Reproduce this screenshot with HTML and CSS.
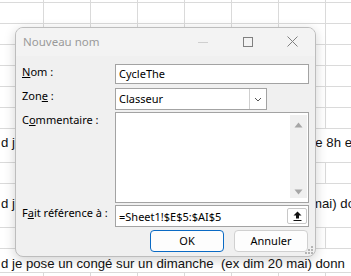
FILE: index.html
```html
<!DOCTYPE html>
<html lang="fr">
<head>
<meta charset="utf-8">
<title>Nouveau nom</title>
<link rel="stylesheet" href="styles.css">
</head>
<body>
<div class="sheet">
  <div class="row r-top"></div>
  <div class="row"></div>
  <div class="row"></div>
  <div class="row"></div>
  <div class="row"></div>
  <div class="row"></div>
  <div class="row"></div>
  <div class="trow ta"><span class="tl">d j</span><span class="tr">de 8h et 20h</span></div>
  <div class="row"></div>
  <div class="trow tb"><span class="tl">d j</span><span class="tr tr-b">mai) donne</span></div>
  <div class="row"></div>
  <div class="trow tc"><span class="tl full">d je pose un congé sur un dimanche&nbsp; (ex dim 20 mai) donn</span></div>
  <div class="row"></div>
</div>

<div class="dialog">
  <div class="titlebar">
    <span class="title">Nouveau nom</span>
    <div class="controls">
      <span class="ctl"><svg width="10" height="10" viewBox="0 0 10 10"><path d="M0 5.5H10" stroke="#cfcfcf" stroke-width="1"/></svg></span>
      <span class="ctl"><svg width="10" height="10" viewBox="0 0 10 10"><rect x="0.5" y="0.5" width="9" height="9" fill="none" stroke="#808080" stroke-width="1"/></svg></span>
      <span class="ctl"><svg width="11" height="11" viewBox="0 0 11 11"><path d="M0.5 0.5L10.5 10.5M10.5 0.5L0.5 10.5" stroke="#808080" stroke-width="1"/></svg></span>
    </div>
  </div>
  <div class="form">
    <label class="lbl"><u>N</u>om :</label>
    <div class="field">CycleThe</div>
    <label class="lbl">Zon<u>e</u> :</label>
    <div class="select"><span class="sel-val">Classeur</span><span class="dd"><svg width="8" height="5" viewBox="0 0 8 5"><path d="M1 1L4 4L7 1" fill="none" stroke="#555" stroke-width="1"/></svg></span></div>
    <label class="lbl">C<u>o</u>mmentaire :</label>
    <div class="textarea"><div class="scroll"><svg width="9" height="6" viewBox="0 0 9 6"><path d="M4.5 0.5L8.5 5.5H0.5Z" fill="#a6a6a6"/></svg><svg width="9" height="6" viewBox="0 0 9 6"><path d="M0.5 0.5H8.5L4.5 5.5Z" fill="#a6a6a6"/></svg></div></div>
    <label class="lbl">F<u>a</u>it référence à :</label>
    <div class="field ref"><span>=Sheet1!$E$5:$AI$5</span><span class="refbtn"><svg width="9" height="10" viewBox="0 0 9 10"><path d="M4.5 0.5L8.5 4.5H6V7.5H3V4.5H0.5Z" fill="#111"/><path d="M0.5 9.5H8.5" stroke="#111" stroke-width="1"/></svg></span></div>
  </div>
  <div class="buttons">
    <button class="btn primary">OK</button>
    <button class="btn">Annuler</button>
  </div>
  <svg class="grip" width="11" height="11" viewBox="0 0 11 11">
    <rect x="8" y="2" width="2" height="2" fill="#b5b5b5"/>
    <rect x="5" y="5" width="2" height="2" fill="#b5b5b5"/>
    <rect x="8" y="5" width="2" height="2" fill="#b5b5b5"/>
    <rect x="2" y="8" width="2" height="2" fill="#b5b5b5"/>
    <rect x="5" y="8" width="2" height="2" fill="#b5b5b5"/>
    <rect x="8" y="8" width="2" height="2" fill="#b5b5b5"/>
  </svg>
</div>
</body>
</html>
```

FILE: styles.css
```css
* { box-sizing: border-box; }
html, body { margin: 0; padding: 0; }
body {
  width: 351px;
  height: 276px;
  overflow: hidden;
  background: #fff;
  position: relative;
  font-family: "Liberation Sans", Arial, sans-serif;
}

.sheet {
  display: flex;
  flex-direction: column;
}
.row {
  height: 21px;
  flex: none;
  border-bottom: 1px solid #dadada;
  background-image: linear-gradient(to right, #dadada 1px, transparent 1px);
  background-size: 47px 100%;
  background-position: 43px 0;
}
.r-top { height: 3px; }

.trow {
  flex: none;
  display: grid;
  grid-template-columns: 308px 1fr;
  border-bottom: 1px solid #dadada;
  font-size: 13.2px;
  line-height: 15px;
  color: #111;
  white-space: nowrap;
  overflow: hidden;
}
.ta { height: 34px; padding-top: 6px; }
.tb { height: 44px; padding-top: 12px; }
.tc { height: 24px; padding-top: 7px; }
.tl { overflow: hidden; padding-left: 1px; }
.tl.full { grid-column: 1 / 3; }
.tr { overflow: hidden; }
.tr-b { padding-left: 3px; }

.dialog {
  position: absolute;
  left: 15px;
  top: 27px;
  width: 301px;
  height: 230px;
  background: #f0f0f0;
  border: 1px solid #bdbdbd;
  border-radius: 8px;
  box-shadow: 0 3px 12px rgba(0, 0, 0, 0.18);
  font-family: "Noto Sans", "Open Sans", sans-serif;
  font-size: 11px;
  color: #000;
  display: flex;
  flex-direction: column;
}

.titlebar {
  height: 28px;
  display: flex;
  align-items: center;
  padding-left: 7px;
  border-radius: 7px 7px 0 0;
  background: #f3f3f3;
}
.title {
  font-size: 11.5px;
  color: #9a9a9a;
  flex: 1;
  padding-bottom: 1px;
}
.controls {
  display: flex;
  height: 100%;
}
.ctl {
  width: 45px;
  display: flex;
  align-items: center;
  justify-content: center;
  padding-bottom: 1px;
}
.ctl svg { display: block; }

.form {
  display: grid;
  grid-template-columns: 93px 194px;
  grid-template-rows: 20px 21px 90px 20px;
  row-gap: 4px;
  padding: 8px 0 0 6px;
}
.form > :nth-child(4) { margin-bottom: -1px; }
.form > :nth-child(5), .form > :nth-child(6) { margin-top: -1px; }
.form > :nth-child(7), .form > :nth-child(8) { margin-top: -2px; }

.lbl {
  line-height: 15px;
  white-space: nowrap;
}
.lbl u { text-decoration-thickness: 1px; text-underline-offset: 1px; }

.field {
  background: #fff;
  border: 1px solid #a3a3a3;
  padding-left: 3px;
  line-height: 17px;
  white-space: nowrap;
}
.field.ref {
  display: flex;
  align-items: center;
  justify-content: space-between;
  padding-right: 1px;
}
.refbtn {
  width: 20px;
  height: 16px;
  background: #fff;
  border: 1px solid #c8c8c8;
  border-radius: 2px;
  display: flex;
  align-items: center;
  justify-content: center;
}
.refbtn svg { display: block; }

.select {
  background: #fff;
  border: 1px solid #a3a3a3;
  width: 152px;
  display: flex;
  align-items: stretch;
}
.sel-val {
  flex: 1;
  padding-left: 3px;
  line-height: 19px;
}
.dd {
  width: 17px;
  border-left: 1px solid #cfcfcf;
  display: flex;
  align-items: center;
  justify-content: center;
}
.dd svg { display: block; }

.textarea {
  background: #fff;
  border: 1px solid #a3a3a3;
  display: flex;
  justify-content: flex-end;
  padding: 2px 1px 4px 0;
}
.scroll {
  width: 17px;
  background: #f0f0f0;
  display: flex;
  flex-direction: column;
  justify-content: space-between;
  align-items: center;
  padding: 7px 0 3px;
}
.scroll svg { display: block; }

.buttons {
  display: flex;
  justify-content: flex-end;
  gap: 10px;
  padding: 3px 7px 0 0;
}
.btn {
  width: 74px;
  height: 22px;
  margin: 0;
  padding: 0;
  background: #fdfdfd;
  border: 1px solid #d0d0d0;
  border-radius: 4px;
  font-family: "Noto Sans", "Open Sans", sans-serif;
  font-size: 11px;
  color: #000;
  line-height: 18px;
}
.btn.primary {
  border-color: #0a6ac4;
}

.grip {
  position: absolute;
  right: 1px;
  bottom: 1px;
}
```
